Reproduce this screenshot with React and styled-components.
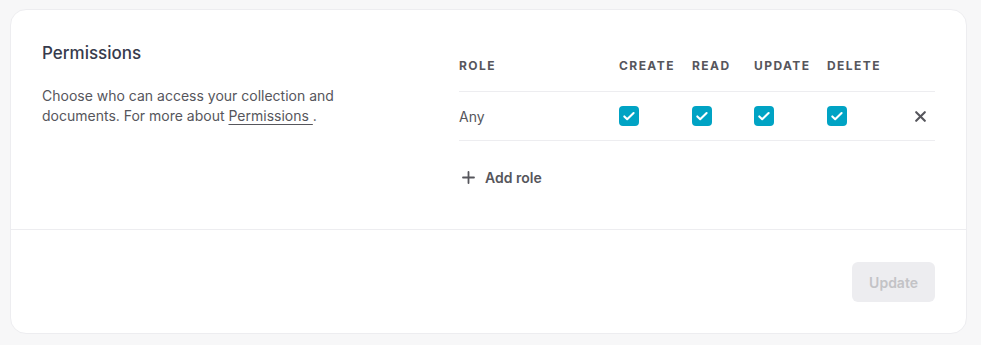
import React, { useState } from 'react';
import styled, { createGlobalStyle } from 'styled-components';

const GlobalStyle = createGlobalStyle`
	body {
		margin: 0;
		background: #f7f7f8;
		font-family: Inter, "Noto Sans", sans-serif;
		color: #56565c;
	}
`;

const Page = styled.div`
	padding: 9px 14px 11px 10px;
`;

const Card = styled.section`
	background: #ffffff;
	border: 1px solid #ededf0;
	border-radius: 16px;
	overflow: hidden;
`;

const Body = styled.div`
	display: grid;
	grid-template-columns: 1fr 476px;
	column-gap: 48px;
	padding: 32px 31px 43px 31px;
`;

const Intro = styled.div`
	display: flex;
	flex-direction: column;
	gap: 23px;
	padding-top: 1px;
`;

const Title = styled.h2`
	margin: 0;
	font-size: 17px;
	line-height: 20px;
	font-weight: 500;
	color: #373b4d;
`;

const Description = styled.p`
	margin: 0;
	max-width: 300px;
	font-size: 14px;
	line-height: 20px;
	color: #56565c;
`;

const DocLink = styled.a`
	color: #56565c;
	text-decoration: underline;
	text-underline-offset: 3px;
`;

const Table = styled.div`
	display: flex;
	flex-direction: column;
`;

const Row = styled.div`
	display: grid;
	grid-template-columns: 160px 73px 62px 73px 1fr 30px;
	align-items: center;
	height: ${(p) => (p.$head ? '50px' : '49px')};
	padding-bottom: ${(p) => (p.$head ? '2px' : '0')};
	box-sizing: border-box;
	border-bottom: 1px solid #ededf0;
`;

const HeadCell = styled.span`
	font-size: 12px;
	font-weight: 700;
	letter-spacing: 0.12em;
	text-transform: uppercase;
	color: #56565c;
`;

const RoleName = styled.span`
	font-size: 14px;
	color: #56565c;
`;

const Box = styled.button`
	width: 20px;
	height: 20px;
	padding: 0;
	border: none;
	border-radius: 4px;
	background: ${(p) => (p.$checked ? '#00a3c4' : '#ffffff')};
	box-shadow: ${(p) => (p.$checked ? 'none' : 'inset 0 0 0 1px #c3c3c6')};
	display: flex;
	align-items: center;
	justify-content: center;
	cursor: pointer;
`;

const RemoveButton = styled.button`
	width: 30px;
	height: 20px;
	padding: 0;
	border: none;
	background: none;
	display: flex;
	align-items: center;
	justify-content: center;
	cursor: pointer;
`;

const AddRole = styled.button`
	display: flex;
	align-items: center;
	gap: 10px;
	margin-top: 28px;
	padding: 0 0 0 3px;
	border: none;
	background: none;
	font-family: inherit;
	font-size: 14px;
	font-weight: 600;
	color: #56565c;
	cursor: pointer;
	align-self: flex-start;
`;

const Footer = styled.div`
	display: flex;
	justify-content: flex-end;
	padding: 32px 31px 31px;
	border-top: 1px solid #ededf0;
`;

const UpdateButton = styled.button`
	height: 40px;
	padding: 0 17px;
	border: none;
	border-radius: 6px;
	background: #ededf0;
	color: #c3c3c6;
	font-family: inherit;
	font-size: 14px;
	font-weight: 600;
	cursor: not-allowed;
`;

const CheckIcon = () => (
	<svg width="14" height="14" viewBox="0 0 14 14" fill="none">
		<path d="M2.3 7.4l2.9 2.8 6.4-6.2" stroke="#fff" strokeWidth="2.1" strokeLinecap="round" strokeLinejoin="round" />
	</svg>
);

const CrossIcon = () => (
	<svg width="11" height="11" viewBox="0 0 11 11" fill="none">
		<path d="M1.2 1.2l8.6 8.6M9.8 1.2l-8.6 8.6" stroke="#56565c" strokeWidth="2.1" strokeLinecap="round" />
	</svg>
);

const PlusIcon = () => (
	<svg width="13" height="13" viewBox="0 0 13 13" fill="none">
		<path d="M6.5 1v11M1 6.5h11" stroke="#56565c" strokeWidth="1.8" strokeLinecap="round" />
	</svg>
);

const actions = ['create', 'read', 'update', 'delete'];

export default function App() {
	const [perms, setPerms] = useState({ create: true, read: true, update: true, delete: true });

	const toggle = (key) => {
		setPerms((prev) => ({ ...prev, [key]: !prev[key] }));
	};

	return (
		<Page>
			<GlobalStyle />
			<Card>
				<Body>
					<Intro>
						<Title>Permissions</Title>
						<Description>
							Choose who can access your collection and documents. For more about{' '}
							<DocLink href="#">Permissions </DocLink>.
						</Description>
					</Intro>
					<Table>
						<Row $head>
							<HeadCell>Role</HeadCell>
							{actions.map((a) => (
								<HeadCell key={a}>{a}</HeadCell>
							))}
							<span />
						</Row>
						<Row>
							<RoleName>Any</RoleName>
							{actions.map((a) => (
								<Box key={a} $checked={perms[a]} onClick={() => toggle(a)}>
									{perms[a] && <CheckIcon />}
								</Box>
							))}
							<RemoveButton aria-label="Remove role">
								<CrossIcon />
							</RemoveButton>
						</Row>
						<AddRole>
							<PlusIcon />
							Add role
						</AddRole>
					</Table>
				</Body>
				<Footer>
					<UpdateButton disabled>Update</UpdateButton>
				</Footer>
			</Card>
		</Page>
	);
}
